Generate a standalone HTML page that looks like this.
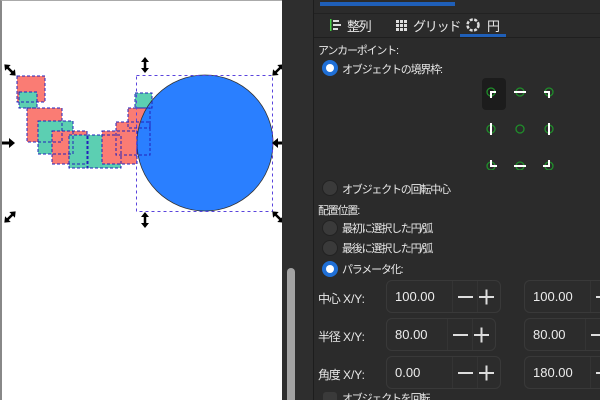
<!DOCTYPE html>
<html style="overflow:hidden;height:400px"><head><meta charset="utf-8"><style>
*{margin:0;padding:0;box-sizing:border-box}
body{width:600px;height:400px;overflow:hidden;background:#2b2b2b;font-family:"Liberation Sans","Noto Sans CJK JP",sans-serif;color:#e8e8e8;font-size:11px;position:relative}
.a{position:absolute;white-space:nowrap}
.j{letter-spacing:-1.2px}
.radio{position:absolute;width:16px;height:16px;border-radius:50%;background:#3a3a3a;border:1px solid #222}
.radio.on{background:#1f6fd6;border:none}
.radio.on::after{content:"";position:absolute;left:4px;top:4px;width:8px;height:8px;border-radius:50%;background:#fff}
.box{position:absolute;height:33px;border:1px solid #393939;border-radius:6px;background:#2c2c2c;overflow:hidden}
.box span{position:absolute;left:8px;top:8px;font-size:13px;color:#ececec}
.sep{position:absolute;top:0;bottom:0;width:1px;background:#343434}
.pm{position:absolute;top:8px}
</style></head><body>
<div class="a" style="left:0;top:0;width:282px;height:400px;background:#fff;border-left:2px solid #888;border-top:1px solid #aaa"></div>
<div class="a" style="left:282px;top:0;width:31px;height:400px;background:#2e2e2e"></div>
<div class="a" style="left:287px;top:268px;width:8px;height:132px;background:#a3a3a3;border-radius:4px 4px 0 0"></div>
<div class="a" style="left:313px;top:0;width:1px;height:400px;background:#1d1d1d"></div>
<svg class="a" style="left:0;top:0" width="282" height="400">
<g stroke="none">
<rect x="17" y="76" width="28" height="26" fill="#fa7c74"/>
<rect x="19" y="92" width="18" height="16" fill="#5ccfb2"/>
<rect x="27" y="108" width="35" height="34" fill="#fa7c74"/>
<rect x="38" y="121" width="35" height="33" fill="#5ccfb2"/>
<rect x="52" y="131" width="35" height="33" fill="#fa7c74"/>
<rect x="69" y="135" width="19" height="33" fill="#5ccfb2"/>
<rect x="87" y="135" width="34" height="33" fill="#5ccfb2"/>
<rect x="102" y="131" width="35" height="33" fill="#fa7c74"/>
<rect x="116" y="122" width="34" height="33" fill="#fa7c74"/>
<rect x="128" y="108" width="22" height="20" fill="#fa7c74"/>
<rect x="135" y="93" width="17" height="15" fill="#5ccfb2"/>
</g>
<circle cx="205" cy="143" r="68" fill="#2a7fff" stroke="#333" stroke-width="0.8"/>
<g fill="none" stroke="#2222bb" stroke-width="1" stroke-dasharray="3,2">
<rect x="17" y="76" width="28" height="26"/><rect x="19" y="92" width="18" height="16"/>
<rect x="27" y="108" width="35" height="34"/><rect x="38" y="121" width="35" height="33"/>
<rect x="52" y="131" width="35" height="33"/><rect x="69" y="135" width="19" height="33"/>
<rect x="87" y="135" width="34" height="33"/><rect x="102" y="131" width="35" height="33"/>
<rect x="116" y="122" width="34" height="33"/><rect x="128" y="108" width="22" height="20"/>
<rect x="135" y="93" width="17" height="15"/>
</g>
<rect x="136.5" y="75.5" width="136" height="136" fill="none" stroke="#5a44dd" stroke-dasharray="3,3"/>
<defs><g id="dv"><path d="M0 -5V5" stroke="#000" stroke-width="2.5"/><path d="M-4 -3L0 -8L4 -3Z M-4 3L0 8L4 3Z" fill="#000"/></g>
<g id="sa"><path d="M-6 0H2" stroke="#000" stroke-width="3"/><path d="M1 -5L7 0L1 5Z" fill="#000"/></g></defs>
<use href="#dv" x="145" y="65"/><use href="#dv" x="145" y="220"/>
<use href="#dv" transform="translate(10,70) rotate(-45)"/>
<use href="#dv" transform="translate(278,70) rotate(45)"/>
<use href="#dv" transform="translate(10,217) rotate(45)"/>
<use href="#dv" transform="translate(278,217) rotate(-45)"/>
<use href="#sa" x="8" y="143"/>
<use href="#sa" transform="translate(279,143) rotate(180)"/>
</svg>
<div class="a" style="left:320px;top:2px;width:135px;height:4px;background:#1f5fb8"></div>
<div class="a" style="left:314px;top:13px;width:286px;height:1px;background:#222"></div>
<div class="a" style="left:314px;top:37px;width:286px;height:1px;background:#1f1f1f"></div>
<svg class="a" style="left:330px;top:17px" width="180" height="16">
<g fill="#ddd"><rect x="0" y="2" width="1.5" height="12" fill="#4c4"/><rect x="3" y="3" width="6" height="2"/><rect x="3" y="7" width="8" height="2"/><rect x="3" y="11" width="5" height="2"/></g>
<g fill="#ddd"><rect x="66" y="3" width="3" height="3"/><rect x="70" y="3" width="3" height="3"/><rect x="74" y="3" width="3" height="3"/><rect x="66" y="7" width="3" height="3"/><rect x="70" y="7" width="3" height="3"/><rect x="74" y="7" width="3" height="3"/><rect x="66" y="11" width="3" height="3"/><rect x="70" y="11" width="3" height="3"/><rect x="74" y="11" width="3" height="3"/></g>
<circle cx="143" cy="8" r="5.5" fill="none" stroke="#ddd" stroke-width="2.5" stroke-dasharray="3,1.5"/>
</svg>
<div class="a j" style="left:347px;top:16px;font-size:13px">整列</div>
<div class="a j" style="left:413px;top:16px;font-size:13px">グリッド</div>
<div class="a j" style="left:487px;top:16px;font-size:13px">円</div>
<div class="a" style="left:460px;top:34px;width:46px;height:3px;background:#1f5fb8"></div>
<div class="a j" style="left:318px;top:42px">アンカーポイント:</div>
<div class="radio on" style="left:322px;top:60px"></div><div class="a j" style="left:342px;top:61px">オブジェクトの境界枠:</div>
<div class="a" style="left:482px;top:78px;width:24px;height:32px;background:#1c1c1c;border-radius:4px"></div>
<svg class="a" style="left:482px;top:80px" width="80" height="90">
<g fill="none" stroke="#1f8f2a" stroke-width="1.3">
<circle cx="9" cy="12" r="4"/><circle cx="38" cy="12" r="4"/><circle cx="67" cy="12" r="4"/>
<circle cx="9" cy="49" r="4"/><circle cx="38" cy="49" r="4"/><circle cx="67" cy="49" r="4"/>
<circle cx="9" cy="86" r="4"/><circle cx="38" cy="86" r="4"/><circle cx="67" cy="86" r="4"/>
</g>
<g stroke="#fff" stroke-width="2" fill="none">
<path d="M14 12H9V18"/><path d="M32 12H44"/><path d="M62 12H67V18"/>
<path d="M9 43V55"/><path d="M67 43V55"/>
<path d="M9 80V86H15"/><path d="M32 86H44"/><path d="M61 86H67V80"/>
</g></svg>
<div class="radio" style="left:322px;top:180px"></div><div class="a j" style="left:342px;top:181px">オブジェクトの回転中心</div>
<div class="a j" style="left:318px;top:202px">配置位置:</div>
<div class="radio" style="left:322px;top:220px"></div><div class="a j" style="left:342px;top:220px">最初に選択した円/弧</div>
<div class="radio" style="left:322px;top:240px"></div><div class="a j" style="left:342px;top:240px">最後に選択した円/弧</div>
<div class="radio on" style="left:322px;top:261px"></div><div class="a j" style="left:342px;top:261px">パラメータ化:</div>
<div class="a" style="left:318px;top:290px;font-size:12px"><span class="j">中心</span> X/Y:</div>
<div class="a" style="left:318px;top:328px;font-size:12px"><span class="j">半径</span> X/Y:</div>
<div class="a" style="left:318px;top:366px;font-size:12px"><span class="j">角度</span> X/Y:</div>
<div class="box" style="left:386px;top:280px;width:115px"><span>100.00</span><div class="sep" style="left:65px"></div><div class="sep" style="left:90px"></div><svg class="pm" style="left:70px" width="40" height="16"><path d="M1 8H16M22 8H37M29.5 0.5V15.5" stroke="#ddd" stroke-width="2"/></svg></div>
<div class="box" style="left:386px;top:318px;width:110px"><span>80.00</span><div class="sep" style="left:60px"></div><div class="sep" style="left:85px"></div><svg class="pm" style="left:65px" width="40" height="16"><path d="M1 8H16M22 8H37M29.5 0.5V15.5" stroke="#ddd" stroke-width="2"/></svg></div>
<div class="box" style="left:386px;top:356px;width:115px"><span>0.00</span><div class="sep" style="left:65px"></div><div class="sep" style="left:90px"></div><svg class="pm" style="left:70px" width="40" height="16"><path d="M1 8H16M22 8H37M29.5 0.5V15.5" stroke="#ddd" stroke-width="2"/></svg></div>
<div class="box" style="left:524px;top:280px;width:76px;border-right:none;border-radius:6px 0 0 6px"><span>100.00</span><div class="sep" style="left:65px"></div><svg class="pm" style="left:70px" width="20" height="16"><path d="M1 8H16" stroke="#ddd" stroke-width="2"/></svg></div>
<div class="box" style="left:524px;top:318px;width:76px;border-right:none;border-radius:6px 0 0 6px"><span>80.00</span><div class="sep" style="left:60px"></div><svg class="pm" style="left:65px" width="20" height="16"><path d="M1 8H16" stroke="#ddd" stroke-width="2"/></svg></div>
<div class="box" style="left:524px;top:356px;width:76px;border-right:none;border-radius:6px 0 0 6px"><span>180.00</span><div class="sep" style="left:65px"></div><svg class="pm" style="left:70px" width="20" height="16"><path d="M1 8H16" stroke="#ddd" stroke-width="2"/></svg></div>
<div class="a" style="left:323px;top:392px;width:14px;height:8px;background:#3a3a3a;border-radius:3px 3px 0 0"></div>
<div class="a j" style="left:342px;top:390px;height:10px;overflow:hidden">オブジェクトを回転</div>
</body></html>
